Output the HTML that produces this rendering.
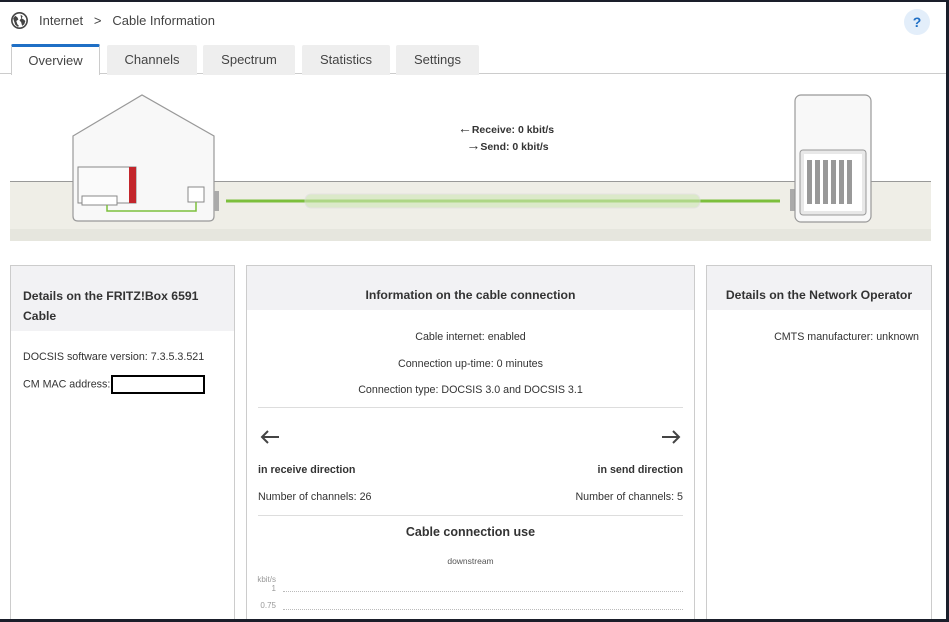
<!DOCTYPE html>
<html><head><meta charset="utf-8"><style>
body{margin:0;width:949px;height:622px;background:#1a1e2a;overflow:hidden;font-family:"Liberation Sans",sans-serif;color:#333}
#pg{position:absolute;left:0;top:2px;width:946px;height:617px;background:#fff;overflow:hidden}
.a{position:absolute}
.tab{position:absolute;top:43px;height:30px;background:#eee;border-radius:2px 2px 0 0;font-size:13px;color:#444;text-align:center;line-height:30px}
.card{position:absolute;top:263px;border:1px solid #ccc;height:400px;background:#fff}
.hd{background:#f2f2f4;font-weight:bold;font-size:12.2px;color:#333}
.t{font-size:10.7px;color:#333}
</style></head><body><div id="pg">
<svg class="a" style="left:11px;top:10px" width="17" height="17" viewBox="0 0 16 16"><circle cx="8" cy="8" r="7.2" fill="none" stroke="#444" stroke-width="1.5"/><path d="M4 3.5l2 1.5 1 2-2 1.5 1 3 1.5 1.5L6.5 14 4 12 3 9 2 6z M9 2.5l2 1.5-1 2 2 1 1.5 1.5-1 3-2 1.5-1-3.5-1.5-1.5 1.5-2z" fill="#444"/></svg>
<div class="a" style="left:39px;top:11px;font-size:13px;color:#444">Internet&nbsp;&nbsp;&nbsp;&gt;&nbsp;&nbsp;&nbsp;Cable Information</div>
<div class="a" style="left:904px;top:7px;width:26px;height:26px;border-radius:13px;background:#e3eefa;color:#1f6fc5;font-weight:bold;font-size:14px;text-align:center;line-height:26px">?</div>
<div class="a" style="left:0;top:71px;width:946px;height:1px;background:#ccc"></div>
<div class="tab" style="left:11px;width:89px;background:#fff;border:1px solid #ccc;border-top:3px solid #1f6fc5;border-bottom:none;top:42px;line-height:28px;box-sizing:border-box;height:31px">Overview</div>
<div class="tab" style="left:107px;width:90px">Channels</div>
<div class="tab" style="left:203px;width:92px">Spectrum</div>
<div class="tab" style="left:302px;width:88px">Statistics</div>
<div class="tab" style="left:396px;width:83px">Settings</div>
<div class="a" style="left:10px;top:179px;width:921px;height:48px;background:#efeee7;border-top:1px solid #999"></div>
<div class="a" style="left:10px;top:227px;width:921px;height:12px;background:#e6e6de"></div>
<svg class="a" style="left:0;top:0" width="946" height="240">
<path d="M73 134 L142 93 L214 134 L214 214 Q214 219 209 219 L78 219 Q73 219 73 214 Z" fill="#f8f8f8" stroke="#999" stroke-width="1.2"/>
<rect x="78" y="165" width="58" height="36" fill="#fafafa" stroke="#888"/>
<rect x="129" y="165" width="7" height="36" fill="#c3262c"/>
<rect x="82" y="194" width="35" height="9" fill="#fff" stroke="#888"/>
<rect x="188" y="185" width="16" height="15" fill="#fff" stroke="#888"/>
<path d="M107 203 V209 H196 V200" fill="none" stroke="#7cbf3c" stroke-width="1.5"/>
<rect x="214" y="189" width="5" height="20" fill="#aaa"/>
<line x1="226" y1="199" x2="780" y2="199" stroke="#7cbf3c" stroke-width="3"/>
<rect x="305" y="192" width="395" height="14" rx="6" fill="#cfe6b6" opacity=".6" stroke="#ddd"/>
<rect x="790" y="187" width="6" height="22" fill="#aaa"/>
<rect x="795" y="93" width="76" height="127" rx="6" fill="#f8f8f8" stroke="#999" stroke-width="1.2"/>
<rect x="800" y="148" width="66" height="65" rx="3" fill="#e8e8e8" stroke="#999"/>
<rect x="804" y="152" width="58" height="57" fill="#fff"/>
<g fill="#999"><rect x="807" y="158" width="5" height="44"/><rect x="815" y="158" width="5" height="44"/><rect x="823" y="158" width="5" height="44"/><rect x="831" y="158" width="5" height="44"/><rect x="839" y="158" width="5" height="44"/><rect x="847" y="158" width="5" height="44"/></g>
</svg>
<div class="a" style="left:440px;top:119px;width:132px;text-align:center;font-size:10.5px;font-weight:bold;line-height:15px;color:#333"><span style="font-size:14px">←</span>Receive: 0 kbit/s<br>&nbsp;<span style="font-size:14px">→</span>Send: 0 kbit/s</div>
<div class="card" style="left:10px;width:223px">
<div class="hd" style="height:45px;padding:20px 12px 0;line-height:20px">Details on the FRITZ!Box 6591 Cable</div>
<div class="t" style="padding:20px 12px 0">DOCSIS software version: 7.3.5.3.521</div>
<div class="t" style="padding:12px 12px 0">CM MAC address:<span style="display:inline-block;width:90px;height:15px;border:2px solid #000;vertical-align:middle;margin-left:1px"></span></div>
</div>
<div class="card" style="left:246px;width:447px">
<div class="hd" style="height:44px;line-height:58px;text-align:center">Information on the cable connection</div>
<div class="t" style="text-align:center;margin-top:14px;line-height:26.5px">Cable internet: enabled<br>Connection up-time: 0 minutes<br>Connection type: DOCSIS 3.0 and DOCSIS 3.1</div>
<div style="margin:3px 11px 0;border-top:1px solid #ddd;position:relative;height:200px">
<svg class="a" style="left:2px;top:22px" width="20" height="14" viewBox="0 0 20 14"><path d="M19 7H2M8 1L2 7l6 6" fill="none" stroke="#444" stroke-width="2"/></svg>
<svg class="a" style="right:2px;top:22px" width="20" height="14" viewBox="0 0 20 14"><path d="M1 7h17M12 1l6 6-6 6" fill="none" stroke="#444" stroke-width="2"/></svg>
<div class="a t" style="left:0;top:56px;font-weight:bold">in receive direction</div>
<div class="a t" style="right:0;top:56px;font-weight:bold">in send direction</div>
<div class="a t" style="left:0;top:83px">Number of channels: 26</div>
<div class="a t" style="right:0;top:83px">Number of channels: 5</div>
<div class="a" style="left:0;right:0;top:107px;border-top:1px solid #ddd"></div>
<div class="a" style="left:0;right:0;top:117px;text-align:center;font-weight:bold;font-size:12.5px">Cable connection use</div>
<div class="a" style="left:0;right:0;top:148px;text-align:center;font-size:8.5px;color:#555">downstream</div>
<div class="a" style="left:-4px;top:167px;font-size:8px;color:#999;text-align:right;width:22px;line-height:9px">kbit/s<br>1</div>
<div class="a" style="left:-4px;top:193px;font-size:8px;color:#999;width:22px;text-align:right">0.75</div>
<div class="a" style="left:25px;right:0;top:183px;border-top:1px dotted #bbb"></div>
<div class="a" style="left:25px;right:0;top:201px;border-top:1px dotted #bbb"></div>
</div>
</div>
<div class="card" style="left:706px;width:224px">
<div class="hd" style="height:44px;line-height:58px;text-align:center">Details on the Network Operator</div>
<div class="t" style="text-align:right;padding:21px 12px 0">CMTS manufacturer: unknown</div>
</div>
</div></body></html>
